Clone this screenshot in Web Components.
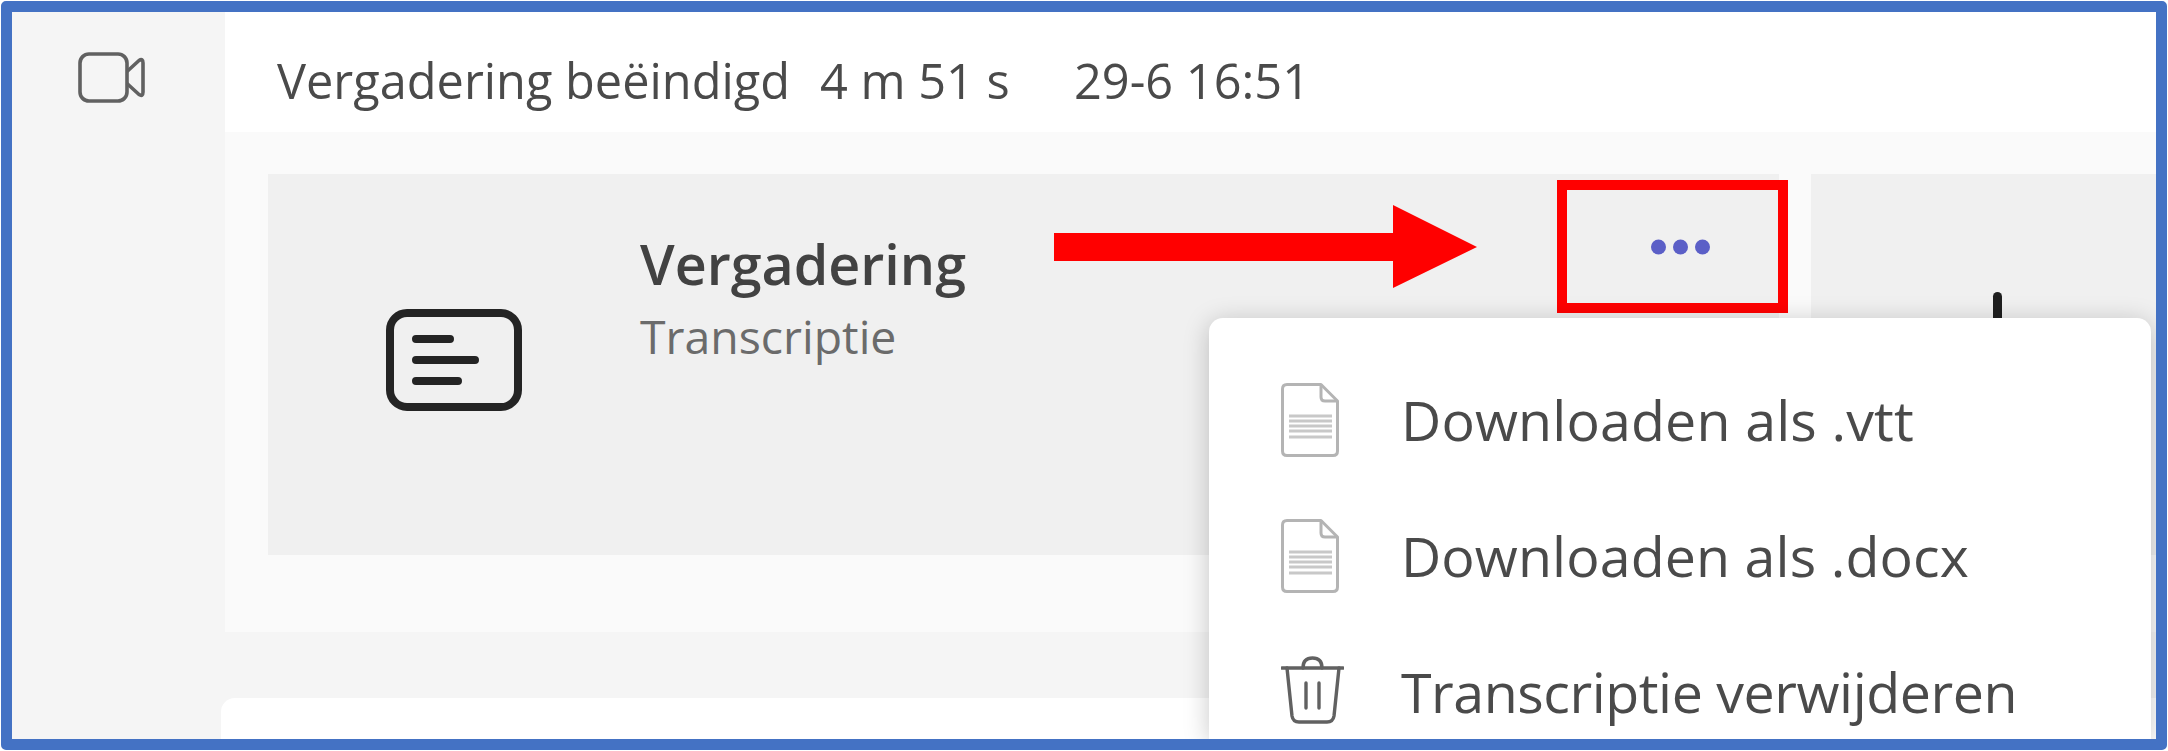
<!DOCTYPE html>
<html lang="nl">
<head>
<meta charset="utf-8">
<title>Vergadering</title>
<style>
  html, body { margin: 0; background: #fff; }
  body { padding: 1px; box-sizing: border-box; width: 2168px; height: 751px; overflow: hidden; font-family: "Open Sans", "Noto Sans", sans-serif; }
</style>
</head>
<body>
<meeting-frame>
  <side-rail slot="rail"></side-rail>
  <meeting-header slot="main"></meeting-header>
  <recording-panel slot="main"></recording-panel>
  <lower-card slot="main"></lower-card>
  <pointer-arrow slot="overlay"></pointer-arrow>
  <highlight-box slot="overlay"></highlight-box>
  <context-menu slot="overlay">
    <menu-item icon="doc" style="letter-spacing: .15px">Downloaden als .vtt</menu-item>
    <menu-item icon="doc" style="letter-spacing: .1px">Downloaden als .docx</menu-item>
    <menu-item icon="trash" style="letter-spacing: -.45px">Transcriptie verwijderen</menu-item>
  </context-menu>
</meeting-frame>

<script>
function define(name, html) {
  customElements.define(name, class extends HTMLElement {
    constructor() {
      super();
      this.attachShadow({ mode: "open" }).innerHTML = html;
    }
  });
}

define("meeting-frame", `
  <style>
    :host { display: block; position: relative; width: 2166px; height: 749px; box-sizing: border-box;
      border: 11px solid #4472c4; border-radius: 5px; overflow: hidden; background: #f5f5f5; }
    .layout { display: grid; grid-template-columns: 213px 1fr; height: 100%; }
    .main { display: flex; flex-direction: column; min-width: 0; }
  </style>
  <div class="layout">
    <slot name="rail"></slot>
    <div class="main"><slot name="main"></slot></div>
  </div>
  <slot name="overlay"></slot>
`);

define("side-rail", `
  <style>
    :host { display: block; background: #f5f5f5; padding: 40px 0 0 66px; }
    svg { display: block; }
  </style>
  <svg width="67" height="51" viewBox="0 0 67 51" fill="none" stroke="#616161" stroke-width="3.6" stroke-linejoin="round">
    <rect x="2" y="2" width="47" height="47" rx="9"></rect>
    <path d="M49 19.5 L61 8.5 Q65 6 65 11 V40 Q65 45 61 42.5 L49 31.5"></path>
  </svg>
`);

define("meeting-header", `
  <style>
    :host { display: flex; align-items: center; height: 120px; box-sizing: border-box; padding: 16px 0 0 52px; background: #fff;
      font-size: 48.7px; color: #4a4a4a; white-space: nowrap; }
    .ended { width: 543px; }
    .dur { width: 254px; }
  </style>
  <span class="ended">Vergadering beëindigd</span>
  <span class="dur">4 m 51 s</span>
  <span>29-6 16:51</span>
`);

define("recording-panel", `
  <style>
    :host { display: flex; gap: 32px; height: 500px; box-sizing: border-box; padding: 42px 0 77px 43px; background: #fafafa; }
    .card { background: #f0f0f0; display: flex; }
    .first { width: 1511px; }
    .second { flex: 1; padding: 118px 0 0 182px; }
    .icon { margin: 135px 0 0 118px; width: 136px; height: 102px; }
    .text { margin: 52px 0 0 118px; display: flex; flex-direction: column; white-space: nowrap; }
    .title { font-size: 55.6px; font-weight: 600; color: #424242; line-height: 76px; }
    .sub { font-size: 46.4px; color: #6b6b6b; line-height: 64px; margin-top: 2px; }
    .more { margin: 16px 0 0 auto; width: 198px; height: 114px; display: flex; align-items: center; justify-content: center; }
    .mark { width: 9px; height: 200px; background: #1f1f1f; border-radius: 5px 5px 0 0; }
  </style>
  <div class="card first">
    <svg class="icon" viewBox="0 0 136 102" fill="none" stroke="#242424" stroke-width="8" stroke-linecap="round">
      <rect x="4" y="4" width="128" height="94" rx="17"></rect>
      <path d="M30 30 H64 M30 51 H89 M30 72 H72"></path>
    </svg>
    <div class="text">
      <span class="title">Vergadering</span>
      <span class="sub">Transcriptie</span>
    </div>
    <div class="more">
      <svg width="59" height="16" viewBox="0 0 59 16" fill="#5b5fc7">
        <circle cx="7.5" cy="8" r="7.5"></circle>
        <circle cx="29.5" cy="8" r="7.5"></circle>
        <circle cx="51.5" cy="8" r="7.5"></circle>
      </svg>
    </div>
  </div>
  <div class="card second"><div class="mark"></div></div>
`);

define("lower-card", `
  <style>
    :host { display: block; flex: 1; margin: 66px 0 0 -4px; background: #fff; border-radius: 14px 0 0 0; position: relative; }
  </style>
`);

define("pointer-arrow", `
  <style>
    :host { position: absolute; left: 1042px; top: 193px; width: 423px; height: 83px; }
    svg { display: block; }
  </style>
  <svg width="423" height="83" viewBox="0 0 423 83"><path fill="#ff0000" d="M0 28 H339 V0 L423 42 L339 83 V56 H0 Z"></path></svg>
`);

define("highlight-box", `
  <style>
    :host { position: absolute; left: 1545px; top: 168px; width: 231px; height: 133px; box-sizing: border-box; border: 10px solid #ff0000; }
  </style>
`);

define("context-menu", `
  <style>
    :host { position: absolute; left: 1197px; right: 5px; top: 306px; bottom: 0; box-sizing: border-box; padding-top: 37px;
      background: #fff; border-radius: 14px 14px 0 0; box-shadow: 0 4px 26px rgba(0,0,0,.22); overflow: hidden; }
  </style>
  <slot></slot>
`);

const icons = {
  doc: `<svg width="58" height="74" viewBox="0 0 58 74" fill="none" stroke="#b4b4b4" stroke-width="3">
      <path stroke-linejoin="round" d="M6 1.5 H40 L56.5 18 V68 Q56.5 72.5 52 72.5 H6 Q1.5 72.5 1.5 68 V6 Q1.5 1.5 6 1.5 Z"></path>
      <path stroke-linejoin="round" d="M40 1.5 V14 Q40 18 44 18 H56.5"></path>
      <path stroke="#c8c8c8" d="M8 33 H51 M8 38 H51 M8 43 H51 M8 48 H51 M8 54 H51"></path>
    </svg>`,
  trash: `<svg width="63" height="68" viewBox="0 0 63 68" fill="none" stroke="#616161" stroke-width="3.4" stroke-linecap="round" stroke-linejoin="round">
      <path d="M1 12 H62"></path>
      <path d="M22 12 Q22 2 31.5 2 Q41 2 41 12"></path>
      <path d="M6 12 L11 60 Q12 66 18 66 H46 Q52 66 53 60 L58 12"></path>
      <path d="M25 27 V52 M38 27 V52"></path>
    </svg>`,
};

customElements.define("menu-item", class extends HTMLElement {
  constructor() {
    super();
    const trash = this.getAttribute("icon") == "trash";
    this.attachShadow({ mode: "open" }).innerHTML = `
      <style>
        :host { display: flex; align-items: center; height: 136px; font-size: 55.5px; color: #4a4a4a; white-space: nowrap; }
        .ic { width: 192px; padding: 0 0 ${trash ? 10 : 7}px 72px; box-sizing: border-box; display: flex; }
        .label { padding-bottom: 7px; }
      </style>
      <div class="ic">${icons[this.getAttribute("icon")]}</div>
      <div class="label"><slot></slot></div>
    `;
  }
});
</script>
</body>
</html>
